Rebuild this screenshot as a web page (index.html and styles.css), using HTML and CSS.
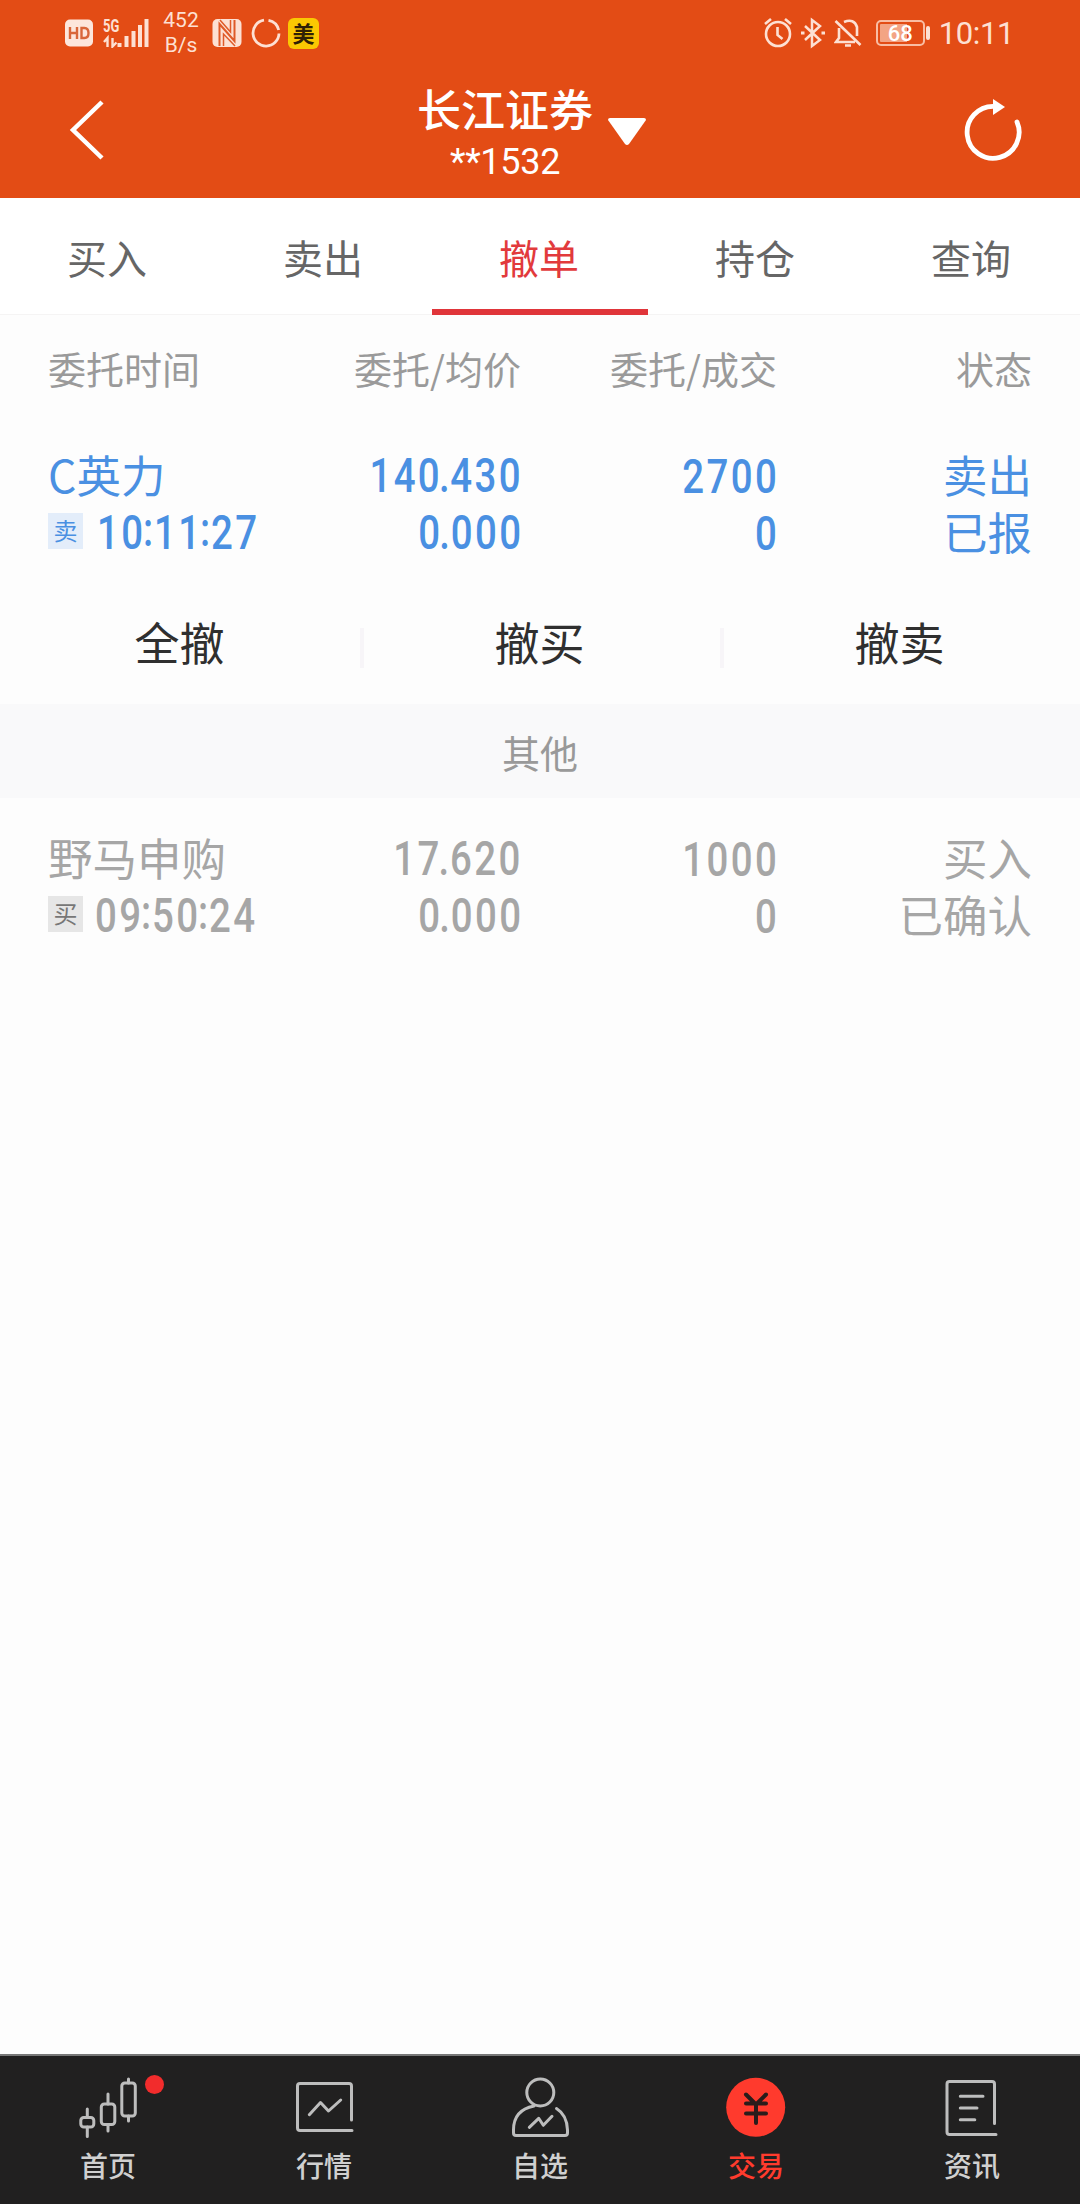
FILE: index.html
```html
<!DOCTYPE html>
<html lang="zh-CN">
<head>
<meta charset="utf-8">
<title>长江证券</title>
<link rel="stylesheet" href="styles.css">
</head>
<body>
<div class="app">
  <div class="top">
    <div class="status">
      <div class="status-group">
        <svg class="ic-hd" width="30" height="30" viewBox="0 0 30 30"><rect x="1" y="1.500" width="28" height="27" rx="5" fill="#fde6dc"/><path d="M6 9v12M6 15h7M13 9v12M17.500 10v10h3q4 0 4-5t-4-5z" fill="none" stroke="#d9663a" stroke-width="2.400"/></svg>
        <div class="net">
          <span class="net-label">5G</span>
          <svg width="48" height="30" viewBox="0 0 48 30" fill="none" stroke="#fde0d3"><path d="M4.500 29v-9l-3.500 4M9.500 20v8.500l4-4" stroke-width="2.400"/><path d="M16.500 29v-4M23.500 29V18M30.500 29V13M37 29V7M43.500 29V1" stroke-width="4"/></svg>
        </div>
        <div class="speed"><span>452</span><span>B/s</span></div>
        <svg class="ic-nfc" width="30" height="30" viewBox="0 0 30 30"><rect x=".5" y="1" width="29" height="28" rx="5" fill="#fde0d3"/><path d="M7.500 28V6l15 17V2" fill="none" stroke="#df5a28" stroke-width="2"/><path d="M11.500 28V16l11.500 12M18.500 2v12L8 2" fill="none" stroke="#df5a28" stroke-width="1.500"/></svg>
        <svg class="ic-ring" width="30" height="30" viewBox="0 0 30 30" fill="none" stroke="#fde0d3" stroke-width="2.800"><path d="M17.500 2.300A13 13 0 0 1 27.700 12M28 15.500A13 13 0 1 1 13 2.200"/></svg>
        <span class="mei">美</span>
      </div>
      <div class="status-group">
        <svg width="30" height="32" viewBox="0 0 30 32" fill="none" stroke="#fde0d3" stroke-width="2.600"><circle cx="15" cy="17" r="12"/><path d="M14.500 10v8l5 4M2 7l6-5M28 7l-6-5"/></svg>
        <svg class="ic-bt" width="24" height="32" viewBox="0 0 24 32" fill="none" stroke="#fde0d3" stroke-width="2.500"><path d="M4 9l15 14-8 6V3l8 6L4 23"/><path d="M0 16h3.500M20.500 16H24" stroke-width="3"/></svg>
        <svg class="ic-bell" width="28" height="32" viewBox="0 0 28 32" fill="none" stroke="#fde0d3" stroke-width="2.600"><path d="M1.500 4l25 24M5 11v10l-3 4h19M10 5q10-4 13 5v9M11 28.500h6"/></svg>
        <div class="battery"><span>68</span></div>
        <span class="clock">10:11</span>
      </div>
    </div>
    <div class="titlebar">
      <svg class="back" width="40" height="64" viewBox="0 0 40 64"><path d="M36 4L7 32l29 28" fill="none" stroke="#fff" stroke-width="4.500"/></svg>
      <div class="account">
        <div class="account-text"><span class="broker">长江证券</span><span class="acct">**1532</span></div>
        <svg class="caret" width="40" height="28" viewBox="0 0 40 28"><path d="M1 2q0-2 2-2h34q2 0 2 2L22 26q-2 2-4 0z" fill="#fff"/></svg>
      </div>
      <svg class="refresh" width="60" height="64" viewBox="0 0 60 64"><path d="M31 8.300A26 26 0 1 0 54 24" fill="none" stroke="#fff" stroke-width="4.800" stroke-linecap="round"/><path d="M30 1l12 8-12 8z" fill="#fff"/></svg>
    </div>
  </div>

  <div class="tabs">
    <div class="tab">买入</div><div class="tab">卖出</div><div class="tab tab-on">撤单</div><div class="tab">持仓</div><div class="tab">查询</div>
  </div>

  <div class="grid head"><span>委托时间</span><span>委托/均价</span><span>委托/成交</span><span>状态</span></div>

  <div class="grid order order-sell">
    <div class="cell"><span class="cn">C英力</span><span class="when"><i class="tag">卖</i><b class="num">10<u class="colon">:</u>11<u class="colon">:</u>27</b></span></div>
    <div class="cell"><b class="num">140<u class="point">.</u>430</b><b class="num">0<u class="point">.</u>000</b></div>
    <div class="cell cell-qty"><b class="num">2700</b><b class="num">0</b></div>
    <div class="cell"><span class="cn">卖出</span><span class="cn">已报</span></div>
  </div>

  <div class="actions"><div class="action">全撤</div><div class="action">撤买</div><div class="action">撤卖</div></div>

  <div class="section">其他</div>

  <div class="grid order order-other">
    <div class="cell"><span class="cn">野马申购</span><span class="when"><i class="tag">买</i><b class="num">09<u class="colon">:</u>50<u class="colon">:</u>24</b></span></div>
    <div class="cell"><b class="num">17<u class="point">.</u>620</b><b class="num">0<u class="point">.</u>000</b></div>
    <div class="cell cell-qty"><b class="num">1000</b><b class="num">0</b></div>
    <div class="cell"><span class="cn">买入</span><span class="cn">已确认</span></div>
  </div>

  <div class="nav">
    <div class="nav-item">
      <svg class="nav-icon" viewBox="0 0 72 72"><rect x="8.800" y="47.500" width="13" height="9.500" rx="3"/><path d="M15.300 39v8.500M15.300 57v9.500M36 24v10M36 54.500V61M56.500 9v4M56.500 46v5"/><rect x="29.300" y="34" width="13.500" height="20.500" rx="3"/><rect x="49.800" y="13" width="13.500" height="33" rx="3"/></svg>
      <span class="dot"></span><span>首页</span>
    </div>
    <div class="nav-item">
      <svg class="nav-icon" viewBox="0 0 72 72"><path d="M64 60.500H12q-2.500 0-2.500-2.500V16q0-2.500 2.500-2.500h49q2.500 0 2.500 2.500v34M21.300 44.700L32.500 32.500l8 8.500L52.700 30"/></svg>
      <span>行情</span>
    </div>
    <div class="nav-item">
      <svg class="nav-icon" viewBox="0 0 72 72"><circle cx="36.300" cy="22.500" r="13.500"/><path d="M30 36Q9.500 40 9.500 60v3q0 2.500 2.500 2.500h49q2.500 0 2.500-2.500v-3Q63 45 52.500 38.500M25.300 57.300l9.400-9 4.600 7 8.700-9"/></svg>
      <span>自选</span>
    </div>
    <div class="nav-item nav-on">
      <svg class="nav-icon" viewBox="0 0 72 72"><circle class="coin" cx="35.700" cy="37.300" r="29.500"/><path class="yen" d="M26 24.500l10 10 10-10M36 34v19M26 33.500h20M26 43.500h20"/></svg>
      <span>交易</span>
    </div>
    <div class="nav-item">
      <svg class="nav-icon" viewBox="0 0 72 72"><path d="M60 64.500H13.500Q11 64.500 11 62V14q0-2.500 2.500-2.500H56q2.500 0 2.500 2.500v39.500M24.300 26.300H47M24.300 38H41M24.300 49.700h14.500"/></svg>
      <span>资讯</span>
    </div>
  </div>
</div>
</body>
</html>
```

FILE: styles.css
```css
* { box-sizing: border-box; }
body {
  margin: 0;
  background: #fdfdfd;
  font-family: "Noto Sans CJK SC", sans-serif;
}
svg { display: block; flex: none; }
.app {
  width: 1080px;
  height: 2204px;
  display: flex;
  flex-direction: column;
  overflow: hidden;
}

/* status bar and title */
.top { height: 198px; background: #e34c15; color: #fff; }
.status {
  height: 66px;
  padding: 0 66px 0 64px;
  display: flex;
  justify-content: space-between;
  color: #fde0d3;
  font-family: Roboto, sans-serif;
}
.status-group { display: flex; align-items: center; }
.net { position: relative; margin-left: 9px; }
.net-label {
  position: absolute;
  left: 0;
  top: -1px;
  font-size: 18px;
  font-weight: 700;
  line-height: 17px;
  transform: scaleX(.72);
  transform-origin: left;
}
.speed {
  width: 38px;
  margin-left: 11px;
  display: flex;
  flex-direction: column;
  align-items: center;
  font-size: 21px;
  line-height: 25px;
}
.ic-nfc { margin-left: 12px; }
.ic-ring { margin-left: 9px; }
.mei {
  width: 31px;
  height: 31px;
  margin-left: 7px;
  border-radius: 6px;
  background: #fbc802;
  color: #2f2005;
  font: 700 22px/29px "Noto Sans CJK SC", sans-serif;
  text-align: center;
}
.ic-bt { margin-left: 8px; }
.ic-bell { margin-left: 9px; }
.battery {
  position: relative;
  width: 49px;
  height: 26px;
  margin-left: 14px;
  border: 2px solid #f9bda3;
  border-radius: 5px;
  background: linear-gradient(90deg, #f3a484 65%, #e34c15 65%) content-box;
  padding: 2px;
  text-align: center;
  font-size: 22px;
  font-weight: 500;
  line-height: 19px;
  color: #fff;
}
.battery::after {
  content: "";
  position: absolute;
  right: -7px;
  top: 4px;
  width: 4px;
  height: 14px;
  border-radius: 2px;
  background: #fde0d3;
}
.clock { margin-left: 14px; font-size: 31px; letter-spacing: -.4px; line-height: 66px; padding-top: 2px; }
.titlebar {
  height: 132px;
  padding: 0 57px 0 66px;
  display: flex;
}
.back, .refresh { margin-top: 32px; }
.account { display: flex; margin: 0 auto 0 311px; padding-top: 19px; }
.account-text { display: flex; flex-direction: column; align-items: center; }
.broker { font-size: 44px; font-weight: 500; line-height: 46px; }
.acct { font-family: Roboto, sans-serif; font-size: 36px; line-height: 40px; margin-top: 11px; letter-spacing: -.3px; }
.caret { margin: 33px 0 0 14px; }

/* trade tabs */
.tabs { height: 117px; display: flex; background: #fff; border-bottom: 1px solid #f5f4f4; }
.tab {
  flex: 1;
  height: 117px;
  padding-right: 2px;
  text-align: center;
  font-size: 40px;
  line-height: 118px;
  color: #666;
}
.tab-on { color: #e23a3c; box-shadow: inset 0 -6px #e0353a; }

/* order table */
.grid {
  display: grid;
  grid-template-columns: 257px 216px 256px 255px;
  padding: 0 48px;
}
.head { height: 106px; font-size: 38px; line-height: 106px; color: #9a9a9a; }
.head span:not(:first-child) { text-align: right; }
.order { height: 170px; padding-top: 26px; }
.order-sell { color: #4a90e2; }
.order-other { padding-top: 32px; color: #a6a6a6; }
.cell { display: flex; flex-direction: column; align-items: flex-end; }
.cell:first-child { align-items: flex-start; }
.cell-qty { padding-top: 1px; }
.cn { font-size: 44.500px; line-height: 57px; margin-top: -2px; margin-bottom: 2px; }
.num {
  margin-right: -2px;
  font-family: Roboto, sans-serif;
  font-size: 48px;
  font-weight: 500;
  line-height: 57px;
  letter-spacing: 3px;
  transform: scaleX(.8);
  transform-origin: right;
}
.point, .colon { position: relative; text-decoration: none; }
.point { margin: 0 -2px 0 -4px; }
.colon { margin: 0 -2px 0 -3px; top: -3px; }
.when { display: flex; align-items: center; height: 57px; }
.when .num { margin-left: 14px; transform-origin: left; }
.order-other .when .num { margin-left: 12px; }
.tag {
  width: 35px;
  height: 36px;
  margin-top: -4px;
  background: #e3edfa;
  text-align: center;
  font-style: normal;
  font-size: 24px;
  line-height: 34px;
}
.order-other .tag { background: #e6e6e6; color: #777; }

/* batch cancel */
.actions { height: 113px; display: flex; color: #2f2f2f; }
.action { flex: 1; text-align: center; font-size: 45px; line-height: 102px; padding-right: 1px; }
.action + .action {
  background: linear-gradient(#f7f5f8, #f7f5f8) 0 37px / 4px 40px no-repeat;
}
.section {
  height: 94px;
  background: #f9f9fa;
  color: #999;
  text-align: center;
  font-size: 38px;
  line-height: 96px;
}

/* bottom navigation */
.nav {
  height: 150px;
  margin-top: auto;
  border-top: 2px solid #777;
  background: #212020;
  display: flex;
  color: #d0d0d0;
}
.nav-item {
  position: relative;
  flex: 1;
  padding-top: 14px;
  display: flex;
  flex-direction: column;
  align-items: center;
  font-size: 28px;
  font-weight: 500;
  line-height: 46px;
}
.nav-icon { width: 72px; height: 72px; fill: none; stroke: #bdbdbd; stroke-width: 3; stroke-linecap: round; stroke-linejoin: round; }
.nav-on { color: #ff3b2d; }
.coin { fill: #ff3a2d; stroke: none; }
.nav-icon .yen { stroke: #2a1c1b; stroke-width: 4; }
.dot {
  position: absolute;
  left: 145px;
  top: 19px;
  width: 19px;
  height: 19px;
  border-radius: 50%;
  background: #f22c2c;
}
```
